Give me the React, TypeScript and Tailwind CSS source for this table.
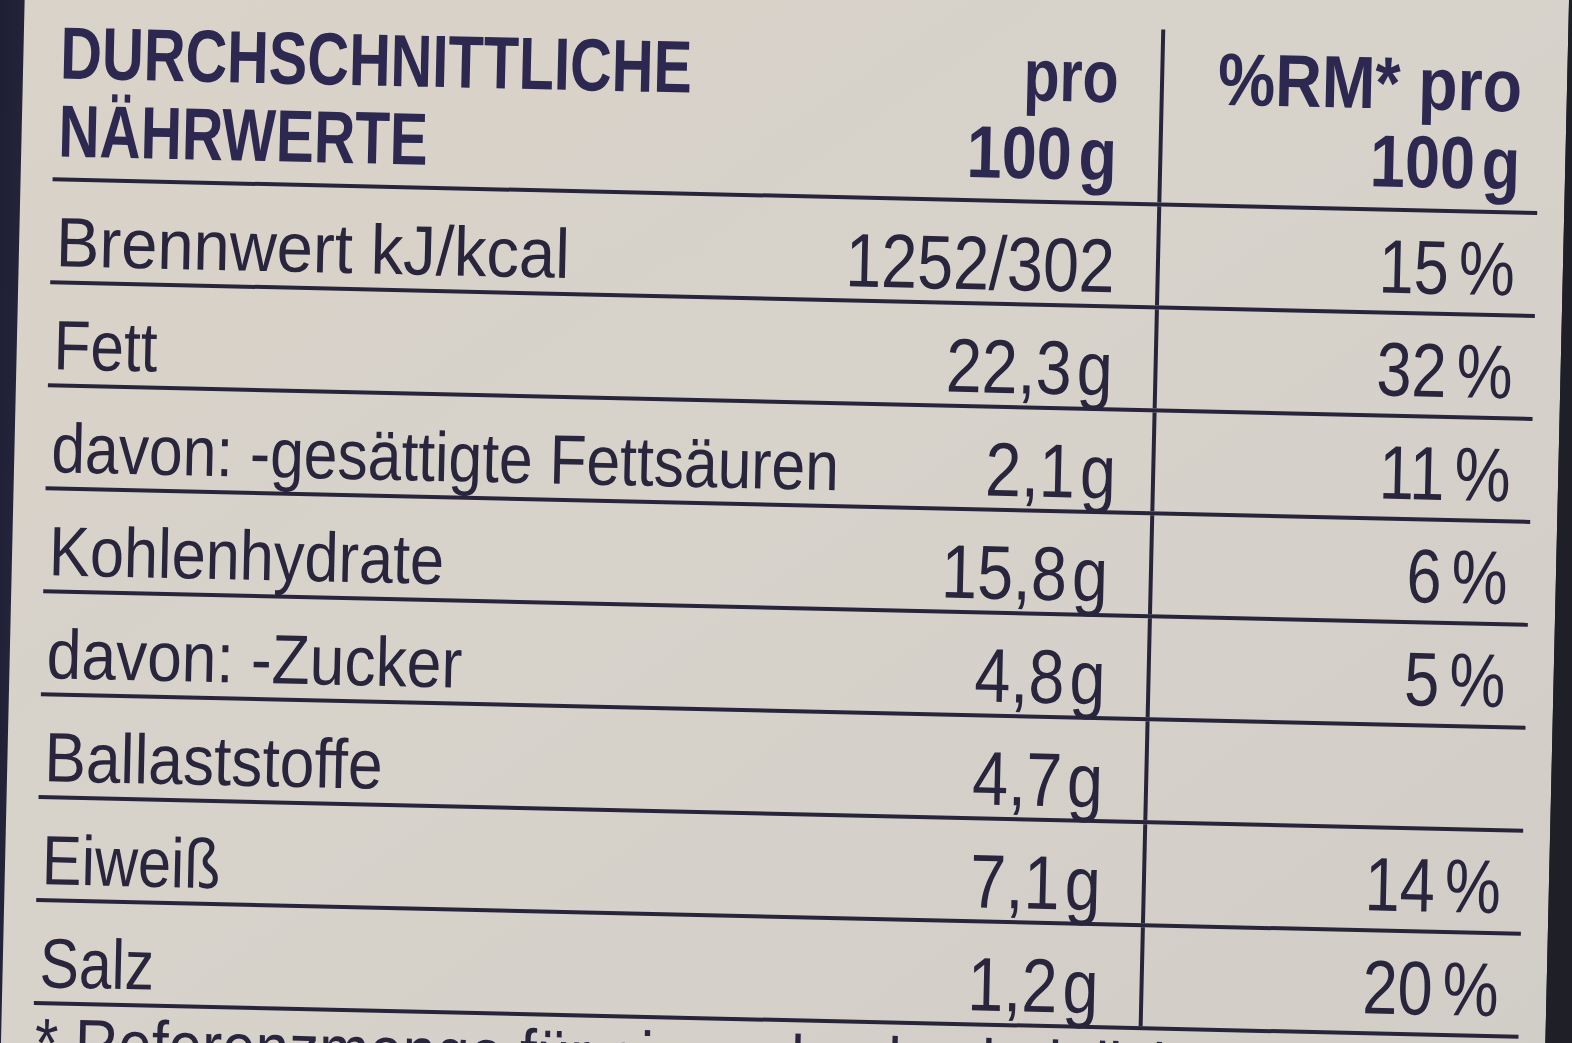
import React from "react";

type Row = { label: string; value: string; unit: boolean; pct: string; ls: string };

const rows: Row[] = [
  { label: "Brennwert kJ/kcal", value: "1252/302", unit: false, pct: "15", ls: "[transform:scaleX(0.93)]" },
  { label: "Fett", value: "22,3", unit: true, pct: "32", ls: "[transform:scaleX(0.86)]" },
  { label: "davon: -gesättigte Fettsäuren", value: "2,1", unit: true, pct: "11", ls: "[transform:scaleX(0.865)]" },
  { label: "Kohlenhydrate", value: "15,8", unit: true, pct: "6", ls: "[transform:scaleX(0.875)]" },
  { label: "davon: -Zucker", value: "4,8", unit: true, pct: "5", ls: "[transform:scaleX(0.89)]" },
  { label: "Ballaststoffe", value: "4,7", unit: true, pct: "", ls: "[transform:scaleX(0.89)]" },
  { label: "Eiweiß", value: "7,1", unit: true, pct: "14", ls: "[transform:scaleX(0.85)]" },
  { label: "Salz", value: "1,2", unit: true, pct: "20", ls: "[transform:scaleX(0.84)]" },
];

function NutritionRow({ row }: { row: Row }) {
  return (
    <div className="flex h-[103px] border-b-4 border-[#28243a]">
      <div className="flex w-[1109px] shrink-0 items-end justify-between border-r-4 border-[#28243a] pl-[5px] pr-[41px]">
        <span className={"inline-block origin-left whitespace-nowrap pb-[3px] text-[70px] leading-none " + row.ls}>
          {row.label}
        </span>
        <span className="inline-block shrink-0 origin-right whitespace-nowrap text-[76px] leading-none [transform:scaleX(0.85)]">
          {row.value}
          {row.unit && <span className="ml-[6px]">g</span>}
        </span>
      </div>
      <div className="flex flex-1 items-end justify-end pr-[21px]">
        {row.pct && (
          <span className="inline-block origin-right whitespace-nowrap pb-[6px] text-[76px] leading-none [transform:scaleX(0.83)]">
            {row.pct}
            <span className="ml-[12px]">%</span>
          </span>
        )}
      </div>
    </div>
  );
}

export default function App() {
  return (
    <div className="h-[1043px] w-[1572px] overflow-hidden bg-[#1c1c2e] font-['Liberation_Sans',Arial,sans-serif] text-[#29253d]">
      <div className="-ml-[40px] -mt-[40px] flex h-[1123px] w-[1652px] rotate-[1.3deg]">
        <div className="w-[53px] shrink-0 bg-gradient-to-r from-[#17182a] to-[#23243a]" />
        <div className="w-[1544px] shrink-0 overflow-hidden bg-gradient-to-br from-[#d9d3c9] via-[#d7d2ca] to-[#d1cdc7] pl-[32px] pr-[27px] pt-[61px]">
          <div className="flex flex-col">
            {/* header */}
            <div className="flex h-[177px] border-b-4 border-[#28243a] font-bold text-[#2d2850]">
              <div className="flex w-[1109px] shrink-0 justify-between border-r-4 border-[#28243a] pl-[5px] pr-[41px] pt-[10px] text-[74px] leading-[78px]">
                <div>
                  <div className="origin-left whitespace-nowrap [transform:scaleX(0.78)]">DURCHSCHNITTLICHE</div>
                  <div className="origin-left whitespace-nowrap [transform:scaleX(0.77)]">NÄHRWERTE</div>
                </div>
                <div className="text-right">
                  <div className="origin-right whitespace-nowrap [transform:scaleX(0.8)]">pro</div>
                  <div className="origin-right whitespace-nowrap [transform:scaleX(0.85)]">
                    100<span className="ml-[8px]">g</span>
                  </div>
                </div>
              </div>
              <div className="flex-1 pr-[18px] pt-[10px] text-right text-[74px] leading-[78px]">
                <div className="origin-right whitespace-nowrap [transform:scaleX(0.87)]">%RM* pro</div>
                <div className="origin-right whitespace-nowrap [transform:scaleX(0.85)]">
                  100<span className="ml-[8px]">g</span>
                </div>
              </div>
            </div>
            {rows.map((r) => (
              <NutritionRow key={r.label} row={r} />
            ))}
            <div className="origin-left whitespace-nowrap pl-[2px] pt-[3px] text-[70px] leading-none [transform:scaleX(0.86)]">
              * Referenzmenge für einen durchschnittlichen Erwachsenen (8400 kJ/2000 kcal)
            </div>
          </div>
        </div>
        <div className="flex-1 bg-[#1f2027]" />
      </div>
    </div>
  );
}
